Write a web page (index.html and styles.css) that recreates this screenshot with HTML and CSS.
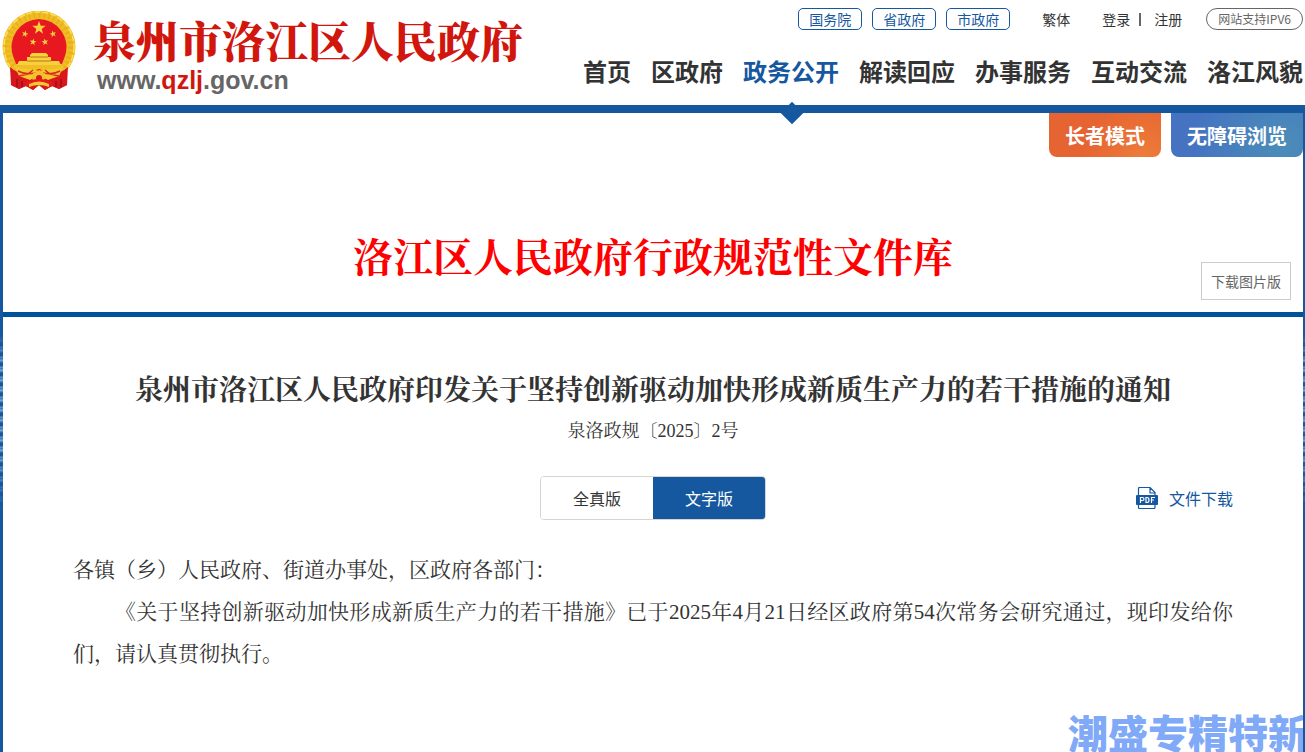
FILE: index.html
```html
<!DOCTYPE html>
<html lang="zh-CN">
<head>
<meta charset="utf-8">
<title>泉州市洛江区人民政府</title>
<link rel="stylesheet" href="styles.css">
</head>
<body>
<header class="header">
  <a class="brand" href="#">
    <svg class="emblem" viewBox="0 0 74 80" aria-hidden="true">
      <defs>
        <path id="star" d="M0-7 1.7-2.2 6.7-2.2 2.7.9 4.1 5.7 0 2.8-4.1 5.7-2.7.9-6.7-2.2-1.7-2.2Z"/>
      </defs>
      <path d="M11 52 9 74 17 78 24 75 31 79 37 74 43 79 50 75 57 78 65 74 63 52Z" fill="#d9161c"/>
      <circle cx="37" cy="36" r="36.500" fill="#f0bd23"/>
      <circle cx="37" cy="36" r="32" fill="none" stroke="#d9971b" stroke-width="6" stroke-dasharray="2 3" opacity=".35"/>
      <circle cx="37" cy="36" r="35" fill="none" stroke="#fbe05a" stroke-width="1.500" stroke-dasharray="6 2"/>
      <path d="M37 8a28 28 0 0 1 26 37L60 53H14L11 45A28 28 0 0 1 37 8Z" fill="#e71820"/>
      <g fill="#f7d13c">
        <use href="#star" x="37" y="17"/>
        <use href="#star" transform="translate(23 23) scale(.5) rotate(15)"/>
        <use href="#star" transform="translate(51 23) scale(.5) rotate(-15)"/>
        <use href="#star" transform="translate(31 31) scale(.5) rotate(10)"/>
        <use href="#star" transform="translate(43 31) scale(.5) rotate(-10)"/>
        <path d="M28 44l2-2h14l2 2v2h3v4h8l2 4H15l2-4h8v-4h3Z"/>
      </g>
      <path d="M28 46h18M25 50h24" stroke="#bd7615"/>
      <path d="M8 56q10 9 20 5l9-3 9 3q10 4 20-5l-1 18-8 4-7-3-7 4-6-5-6 5-7-4-7 3-8-4Z" fill="#d9161c"/>
      <path d="M12 54c6 4 12 5 17 4l8 2 8-2c5 1 11 0 17-4l-5 11-11 4-9-5-9 5-11-4Z" fill="#f5c830"/>
      <path d="M16 60q9 5 21 1 12 4 21-1M17 65l9-2 5-4M57 65l-9-2-5-4" fill="none" stroke="#d92c1d" stroke-width="1.500"/>
      <path d="M15 68v8M20 70v6M59 68v8M54 70v6" stroke="#8f1116" stroke-width="1.300"/>
      <circle cx="37" cy="66" r="6" fill="#f3c22b" stroke="#f3c22b" stroke-width="2" stroke-dasharray="2 1"/>
      <circle cx="37" cy="67" r="3" fill="#d9161c"/>
      <path d="M22 72q15-8 30 0l-3 4q-12-5-24 0Z" fill="#e71820"/>
      <path d="M27 73q10-5 20 0v3q-10-4-20 0Z" fill="#f5c830"/>
    </svg>
    <span class="brand-text">
      <span class="brand-name">泉州市洛江区人民政府</span>
      <span class="brand-url">www.<b>qzlj</b>.gov.cn</span>
    </span>
  </a>
  <div class="header-right">
    <div class="toolbar">
      <div class="gov-links">
        <a class="gov-link" href="#">国务院</a>
        <a class="gov-link" href="#">省政府</a>
        <a class="gov-link" href="#">市政府</a>
      </div>
      <a class="text-link" href="#">繁体</a>
      <div class="account">
        <a class="text-link" href="#">登录</a>
        <a class="text-link register" href="#">注册</a>
      </div>
      <a class="ipv6" href="#">网站支持IPV6</a>
    </div>
    <nav class="nav">
      <a href="#">首页</a>
      <a href="#">区政府</a>
      <a class="active" href="#">政务公开</a>
      <a href="#">解读回应</a>
      <a href="#">办事服务</a>
      <a href="#">互动交流</a>
      <a href="#">洛江风貌</a>
    </nav>
  </div>
</header>
<div class="page">
  <main class="paper">
    <section class="banner">
      <div class="modes">
        <button class="mode elder" type="button">长者模式</button>
        <button class="mode access" type="button">无障碍浏览</button>
      </div>
      <h1 class="library">洛江区人民政府行政规范性文件库</h1>
      <button class="save-image" type="button">下载图片版</button>
    </section>
    <article class="document">
      <h2 class="title">泉州市洛江区人民政府印发关于坚持创新驱动加快形成新质生产力的若干措施的通知</h2>
      <p class="number">泉洛政规〔2025〕2号</p>
      <div class="actions">
        <div class="tabs">
          <button class="tab" type="button">全真版</button>
          <button class="tab selected" type="button">文字版</button>
        </div>
        <a class="download" href="#">
          <svg class="pdf" viewBox="0 0 22 22" aria-hidden="true">
            <path d="M2.500 9V1.500q0-1 1-1H14l5 5V9M14 .5V6h5M2.500 17v3.500q0 1 1 1h14.500q1 0 1-1V17" fill="none" stroke="#15589f" stroke-width="1.200"/>
            <rect y="8" width="22" height="10" rx="1" fill="#15589f"/>
            <path d="M4.500 16v-5.500h2q1.500 0 1.500 1.500t-1.500 1.500h-2M10 10.500v5h1q2 0 2-2.500t-2-2.500ZM15.500 16v-5.500H19M15.500 13H18" fill="none" stroke="#fff" stroke-width="1.200"/>
          </svg>
          文件下载
        </a>
      </div>
      <div class="content">
        <p>各镇（乡）人民政府、街道办事处，区政府各部门：</p>
        <p class="indent">《关于坚持创新驱动加快形成新质生产力的若干措施》已于2025年4月21日经区政府第54次常务会研究通过，现印发给你们，请认真贯彻执行。</p>
      </div>
    </article>
    <div class="watermark">潮盛专精特新</div>
  </main>
</div>
</body>
</html>
```
FILE: styles.css
```css
* { box-sizing: border-box; }

html, body { height: 100%; }

body {
  margin: 0;
  display: flex;
  flex-direction: column;
  overflow: hidden;
  background: #fff;
  color: #333;
  font-family: "Microsoft YaHei", "Noto Sans CJK SC", sans-serif;
  font-size: 14px;
}

a { color: inherit; text-decoration: none; }
button { font-family: inherit; cursor: pointer; }
h1, h2, p { margin: 0; }

.header {
  position: relative;
  z-index: 1;
  display: flex;
  justify-content: space-between;
  flex: none;
  height: 113px;
  padding: 8px 2px 0;
  border-bottom: 8px solid #15589f;
}

.brand { display: flex; }
.emblem { width: 74px; height: 80px; margin-top: 3px; }
.brand-text { display: flex; flex-direction: column; margin-left: 17px; white-space: nowrap; }
.brand-name {
  margin-top: 6px;
  color: #d1160e;
  font-family: "Noto Serif CJK SC", "Source Han Serif SC", "Noto Sans CJK SC", serif;
  font-size: 43px;
  font-weight: 900;
  line-height: 52px;
}
.brand-url {
  margin-left: 4px;
  color: #666;
  font-family: "Liberation Sans", Arial, sans-serif;
  font-size: 25px;
  font-weight: 700;
  line-height: 28px;
}
.brand-url b { color: #d1160e; }

.header-right { display: flex; flex-direction: column; align-items: flex-end; white-space: nowrap; }
.toolbar { display: flex; align-items: center; height: 22px; line-height: 20px; }
.gov-links { display: flex; gap: 10px; margin-right: 32px; }
.gov-link {
  padding: 0 10px;
  border: 1px solid #15589f;
  border-radius: 5px;
  color: #15589f;
}
.account { display: flex; margin: 0 24px 0 32px; }
.register { position: relative; margin-left: 24px; }
.register::before {
  content: "";
  position: absolute;
  left: -15px;
  top: 4px;
  width: 2px;
  height: 13px;
  background: #666;
}
.ipv6 {
  padding: 0 11px;
  border: 1px solid #666;
  border-radius: 11px;
  color: #666;
  font-size: 12px;
}

.nav { display: flex; gap: 20px; margin-top: 24px; font-size: 24px; font-weight: 700; line-height: 34px; }
.nav .active { position: relative; color: #15589f; }
.nav .active::after {
  content: "";
  position: absolute;
  left: 50%;
  top: 51px;
  width: 16px;
  height: 16px;
  margin-left: -7px;
  background: #15589f;
  transform: rotate(45deg);
}

.page {
  flex: 1;
  display: flex;
  padding: 0 2px 0 3px;
  background:
    linear-gradient(#15589f 220px, transparent 250px, transparent 340px, #15589f 400px),
    repeating-linear-gradient(#15589f 0 3px, #6c9dcd 4px, #2b6db0 6px, #89b2d9 7px, #15589f 10px);
}
.paper { position: relative; flex: 1; min-width: 0; overflow: hidden; background: #fff; }

.banner { position: relative; height: 204px; border-bottom: 5px solid #00529a; }
.modes { display: flex; justify-content: flex-end; gap: 10px; }
.mode {
  height: 44px;
  padding: 0 16px;
  border: 0;
  border-radius: 0 0 8px 8px;
  color: #fff;
  font-size: 20px;
  font-weight: 700;
}
.elder { background: radial-gradient(circle at 85% 100%, #ed7c3a, #e66431 60px); }
.access { background: radial-gradient(circle at 85% 75%, #4b8db8, #4573c2 90px); }
.library {
  margin-top: 68px;
  color: #f00;
  font-family: "Noto Serif CJK SC", "Source Han Serif SC", "Noto Sans CJK SC", serif;
  font-size: 40px;
  font-weight: 700;
  line-height: 60px;
  text-align: center;
}
.save-image {
  position: absolute;
  right: 12px;
  bottom: 12px;
  height: 38px;
  padding: 0 9px;
  border: 1px solid #ccc;
  background: #fff;
  color: #666;
  font-size: 14px;
}

.document { padding: 52px 70px 0; font-family: "Liberation Serif", "Noto Serif CJK SC", "Noto Sans CJK SC", serif; }
.title { font-size: 28px; font-weight: 700; line-height: 44px; text-align: center; }
.number { font-size: 18px; line-height: 36px; text-align: center; }
.actions {
  display: grid;
  grid-template-columns: 1fr auto 1fr;
  align-items: center;
  margin-top: 27px;
  font-family: "Noto Sans CJK SC", sans-serif;
}
.tabs {
  display: flex;
  grid-column: 2;
  overflow: hidden;
  border: 1px solid #d5d5d5;
  border-radius: 4px;
}
.tab { height: 42px; padding: 0 32px; border: 0; background: #fff; color: #333; font-size: 16px; }
.tab.selected { background: #15589f; color: #fff; }
.download {
  display: flex;
  align-items: center;
  justify-self: end;
  gap: 11px;
  color: #15589f;
  font-size: 16px;
  line-height: 24px;
}
.pdf { width: 22px; height: 22px; }
.content { margin-top: 29px; font-size: 21px; line-height: 42px; }
.indent { text-indent: 2em; text-align: justify; }

.watermark {
  position: absolute;
  left: calc(100% - 235px);
  bottom: -10px;
  color: #80a9f7;
  font-size: 40px;
  font-weight: 900;
  line-height: 60px;
  white-space: nowrap;
}
```
